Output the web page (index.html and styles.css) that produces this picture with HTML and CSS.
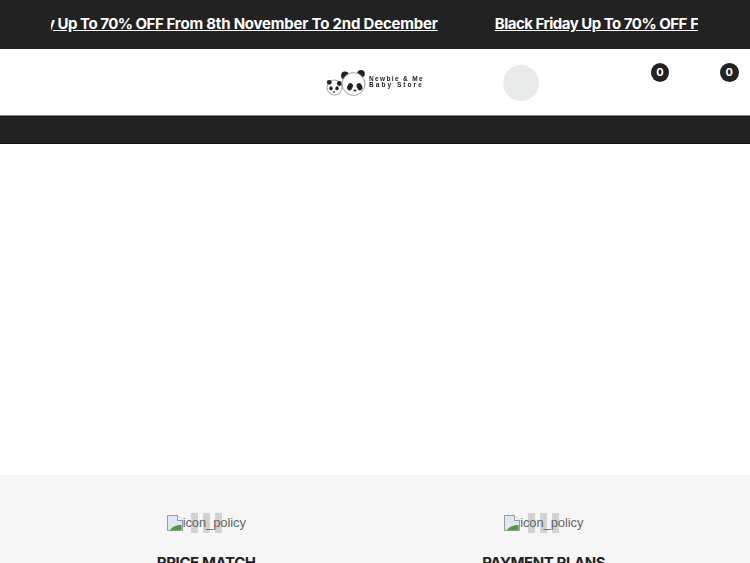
FILE: index.html
```html
<!DOCTYPE html>
<html lang="en">
<head>
<meta charset="utf-8">
<title>Newbie &amp; Me Baby Store</title>
<link rel="stylesheet" href="styles.css">
</head>
<body>
<div class="announce">
  <div class="marquee">
    <a class="promo promo-first" href="#"><span class="promo-lead">Black Friday Up To 70% OFF</span> From 8th November To 2nd December</a>
    <a class="promo" href="#"><span class="promo-lead">Black Friday Up To 70% OFF</span> From 8th November To 2nd December</a>
  </div>
</div>
<header class="header">
  <div class="logo">
    <svg class="logo-mark" width="40" height="27" viewBox="0 0 40 27">
      <circle cx="8.500" cy="17.500" r="7.500" fill="#fff" stroke="#888" stroke-width=".8"/>
      <circle cx="3.300" cy="12.300" r="2.400" fill="#222"/><circle cx="13.300" cy="13.500" r="2.400" fill="#222"/>
      <ellipse cx="5" cy="18.300" rx="1.700" ry="2.100" fill="#222"/><ellipse cx="11" cy="18.300" rx="1.700" ry="2.100" fill="#222"/>
      <ellipse cx="8" cy="22" rx="1.300" ry=".8" fill="#333"/>
      <circle cx="19" cy="5.500" r="3.900" fill="#222"/><circle cx="35" cy="3.800" r="3.800" fill="#222"/>
      <circle cx="27.500" cy="14" r="11.400" fill="#fff" stroke="#888" stroke-width=".8"/>
      <ellipse cx="24" cy="16.700" rx="2.700" ry="3.800" fill="#222" transform="rotate(20 24 16.700)"/>
      <ellipse cx="33.500" cy="16.700" rx="2.700" ry="3.800" fill="#222" transform="rotate(-20 33.500 16.700)"/>
      <ellipse cx="29" cy="20.500" rx="1.600" ry="1" fill="#333"/>
    </svg>
    <div class="logo-text"><span class="logo-line-a">Newbie &amp; Me</span><span class="logo-line-b">Baby Store</span></div>
  </div>
  <span class="search-dot"></span>
  <span class="badge badge-wish">0</span>
  <span class="badge badge-cart">0</span>
</header>
<div class="navbar"></div>
<main class="hero"></main>
<section class="policies">
  <div class="policy">
    <div class="policy-icon">
      <span class="bars"><i></i><i></i><i></i></span>
      <svg class="broken" width="16" height="16" viewBox="0 0 16 16">
        <path d="M.5.5h10l5 5v10H.5z" fill="#dfe8f6" stroke="#9a9a9a"/>
        <path d="M3 15c2-3 6-5 11.500-5v5z" fill="#4f9a35"/>
        <path d="M10.500.5v5h5" fill="#fff" stroke="#9a9a9a"/>
      </svg>
      <span class="alt">icon_policy</span>
    </div>
    <h3 class="policy-title">PRICE MATCH</h3>
  </div>
  <div class="policy">
    <div class="policy-icon">
      <span class="bars"><i></i><i></i><i></i></span>
      <svg class="broken" width="16" height="16" viewBox="0 0 16 16">
        <path d="M.5.5h10l5 5v10H.5z" fill="#dfe8f6" stroke="#9a9a9a"/>
        <path d="M3 15c2-3 6-5 11.500-5v5z" fill="#4f9a35"/>
        <path d="M10.500.5v5h5" fill="#fff" stroke="#9a9a9a"/>
      </svg>
      <span class="alt">icon_policy</span>
    </div>
    <h3 class="policy-title">PAYMENT PLANS</h3>
  </div>
</section>
</body>
</html>
```
FILE: styles.css
```css
* { box-sizing: border-box; }
html, body { margin: 0; height: 563px; overflow: hidden; background: #fff; font-family: "Liberation Sans", Arial, sans-serif; }
.announce { height: 49px; background: #222; padding: 0 52px 2px 51px; display: flex; align-items: center; }
.marquee { width: 100%; overflow: hidden; display: flex; gap: 57px; white-space: nowrap; }
.promo { flex: none; color: #fff; font: 700 15px/20px Inter, sans-serif; letter-spacing: -0.2px; text-decoration: underline; }
.promo-lead { letter-spacing: -0.5px; }
.promo-first { margin-left: -80px; }
.header { position: relative; height: 66px; display: flex; justify-content: center; align-items: center; background: #fff; }
.logo { display: flex; align-items: center; gap: 3px; margin-top: 3px; padding-right: 2px; filter: blur(.35px); }
.logo-text { display: flex; flex-direction: column; margin-top: -3px; width: 53px; font: 700 6.500px/6.500px "Liberation Sans", sans-serif; color: #222; white-space: nowrap; }
.logo-line-a { letter-spacing: 1.350px; }
.logo-line-b { letter-spacing: 2.050px; }
.search-dot { position: absolute; left: 503px; top: 16px; width: 36px; height: 36px; border-radius: 50%; background: #e9eaea; }
.badge { position: absolute; top: 14px; width: 18.600px; height: 19px; border-radius: 50%; background: #222; color: #fff; font: 700 11px/19px Inter, sans-serif; text-align: center; }
.badge-wish { left: 650.700px; }
.badge-cart { left: 720px; }
.navbar { height: 29px; background: #222; border-top: 1px solid #8a8a8a; box-shadow: inset 0 1px #111, inset 0 -1px #111; }
.hero { height: 331px; background: #fff; }
.policies { height: 88px; background: #f6f6f6; display: grid; grid-template-columns: 1fr 1fr; padding: 38px 37.500px 0; }
.policy { display: flex; flex-direction: column; align-items: center; }
.policy-icon { position: relative; height: 20px; display: flex; align-items: center; color: #666; font-size: 13px; }
.broken { position: relative; flex: none; }
.alt { position: relative; line-height: 20px; letter-spacing: -0.1px; }
.bars { position: absolute; left: 24px; top: 0; display: flex; gap: 5px; }
.bars i { display: block; width: 7px; height: 20px; background: #d2d2d2; }
.policy-title { margin: 20px 0 0; font: 700 15px/20px Inter, sans-serif; color: #222; letter-spacing: -0.4px; white-space: nowrap; }
```
